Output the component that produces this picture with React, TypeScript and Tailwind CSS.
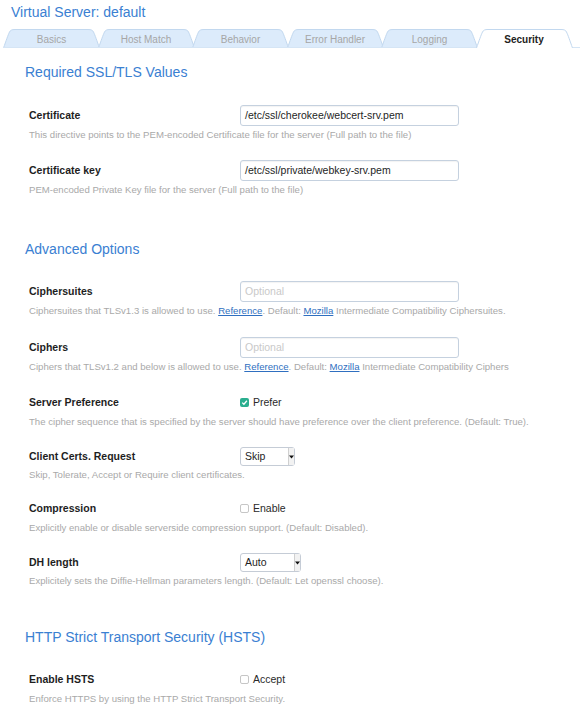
import React from "react";

const TABS = ["Basics", "Host Match", "Behavior", "Error Handler", "Logging", "Security"];

function Tab({ label, active, first }: { label: string; active: boolean; first: boolean }) {
  return (
    <div
      className={`relative w-[97px] h-[19px] flex items-center justify-center ${first ? "" : "-ml-[2.5px]"} ${active ? "z-10" : ""}`}
    >
      <svg className="absolute left-0 top-0" width="97" height="19" viewBox="0 0 97 19">
        <path
          d="M0.5 19 C3 12 5 6 6.5 3 C7.5 1 9 0.5 12 0.5 L85 0.5 C88 0.5 89.5 1 90.5 3 C92 6 94 12 96.5 19"
          fill={active ? "#ffffff" : "#dcebfb"}
          stroke="#c2d8ef"
          strokeWidth="1"
        />
        {!active && <line x1="0" y1="18.5" x2="97" y2="18.5" stroke="#d5e5f5" strokeWidth="1" />}
      </svg>
      <span
        className={`relative text-[10px] leading-[12px] mt-[2px] ${active ? "font-bold text-[#222]" : "text-[#a6a6a6]"}`}
      >
        {label}
      </span>
    </div>
  );
}

function Heading({ children, className = "" }: { children: React.ReactNode; className?: string }) {
  return <div className={`text-[14px] leading-[17px] text-[#3a80d2] ${className}`}>{children}</div>;
}

function Row({
  label,
  control,
  desc,
  h = 21,
  className = "",
}: {
  label: string;
  control: React.ReactNode;
  desc: React.ReactNode;
  h?: number;
  className?: string;
}) {
  return (
    <div className={`pl-[4px] ${className}`}>
      <div className={`flex items-center ${h === 21 ? "h-[21px]" : "h-[19px]"}`}>
        <div className="w-[211px] font-bold text-[10.5px] leading-[13px] text-[#1e1e1e]">{label}</div>
        {control}
      </div>
      <div className="mt-[3px] text-[9.6px] leading-[12px] text-[#a9a9a9] whitespace-nowrap">{desc}</div>
    </div>
  );
}

function TextInput({ value, placeholder }: { value?: string; placeholder?: string }) {
  return (
    <div className="w-[219px] h-[21px] border border-[#c5d1df] rounded-[3px] bg-white flex items-center px-[4px] shadow-[inset_0_1px_1px_rgba(0,0,0,0.05)]">
      {value ? (
        <span className="text-[10.5px] leading-[13px] text-[#1e1e1e]">{value}</span>
      ) : (
        <span className="text-[10.5px] leading-[13px] text-[#c9c9c9]">{placeholder}</span>
      )}
    </div>
  );
}

function Check({ checked, label }: { checked: boolean; label: string }) {
  return (
    <div className="flex items-center">
      {checked ? (
        <span className="w-[9px] h-[9px] rounded-[2px] bg-[#2bae8f] flex items-center justify-center">
          <svg width="7" height="7" viewBox="0 0 7 7">
            <path d="M1.2 3.6 L2.9 5.2 L5.9 1.8" fill="none" stroke="#fff" strokeWidth="1.3" />
          </svg>
        </span>
      ) : (
        <span className="w-[9px] h-[9px] rounded-[2px] border border-[#c6c6c6] bg-white" />
      )}
      <span className="ml-[4px] text-[10.5px] leading-[13px] text-[#2a2a2a]">{label}</span>
    </div>
  );
}

function Select({ value, w }: { value: string; w: "s" | "l" }) {
  return (
    <div
      className={`${w === "s" ? "w-[55px]" : "w-[61px]"} h-[19px] border border-[#c5ccd6] rounded-[3px] bg-white flex items-center justify-between pl-[4px]`}
    >
      <span className="text-[10.5px] leading-[13px] text-[#1e1e1e]">{value}</span>
      <span className="h-full w-[6px] flex items-center justify-center border-l border-[#d0d0d0] bg-[#f2f2f2]">
        <svg width="5" height="4" viewBox="0 0 5 4">
          <path d="M0 0.5 L5 0.5 L2.5 3.5 Z" fill="#111" />
        </svg>
      </span>
    </div>
  );
}

function Link({ children }: { children: React.ReactNode }) {
  return <span className="text-[#2f6fc0] underline">{children}</span>;
}

export default function App() {
  return (
    <div className="w-[580px] h-[714px] bg-white overflow-hidden font-['Liberation_Sans',Arial,sans-serif]">
      <div className="pl-[11px] pt-[4px] text-[14px] leading-[16px] text-[#3a80d2]">Virtual Server: default</div>
      <div className="mt-[9px] flex items-end pl-[3px] h-[19px]">
        {TABS.map((t, i) => (
          <Tab key={t} label={t} active={t === "Security"} first={i === 0} />
        ))}
        <div className="flex-1 h-[19px] border-b border-[#d5e5f5]" />
      </div>

      <div className="pl-[25px]">
        <Heading className="mt-[16px]">Required SSL/TLS Values</Heading>
        <Row
          className="mt-[24px]"
          label="Certificate"
          control={<TextInput value="/etc/ssl/cherokee/webcert-srv.pem" />}
          desc="This directive points to the PEM-encoded Certificate file for the server (Full path to the file)"
        />
        <Row
          className="mt-[19px]"
          label="Certificate key"
          control={<TextInput value="/etc/ssl/private/webkey-srv.pem" />}
          desc="PEM-encoded Private Key file for the server (Full path to the file)"
        />

        <Heading className="mt-[45px]">Advanced Options</Heading>
        <Row
          className="mt-[23px]"
          label="Ciphersuites"
          control={<TextInput placeholder="Optional" />}
          desc={
            <>
              Ciphersuites that TLSv1.3 is allowed to use. <Link>Reference</Link>. Default: <Link>Mozilla</Link>{" "}
              Intermediate Compatibility Ciphersuites.
            </>
          }
        />
        <Row
          className="mt-[20px]"
          label="Ciphers"
          control={<TextInput placeholder="Optional" />}
          desc={
            <>
              Ciphers that TLSv1.2 and below is allowed to use. <Link>Reference</Link>. Default: <Link>Mozilla</Link>{" "}
              Intermediate Compatibility Ciphers
            </>
          }
        />
        <Row
          className="mt-[19px]"
          label="Server Preference"
          control={<Check checked label="Prefer" />}
          desc="The cipher sequence that is specified by the server should have preference over the client preference. (Default: True)."
        />
        <Row
          className="mt-[19px]"
          h={19}
          label="Client Certs. Request"
          control={<Select value="Skip" w="s" />}
          desc="Skip, Tolerate, Accept or Require client certificates."
        />
        <Row
          className="mt-[17px]"
          label="Compression"
          control={<Check checked={false} label="Enable" />}
          desc="Explicitly enable or disable serverside compression support. (Default: Disabled)."
        />
        <Row
          className="mt-[19px]"
          h={19}
          label="DH length"
          control={<Select value="Auto" w="l" />}
          desc="Explicitely sets the Diffie-Hellman parameters length. (Default: Let openssl choose)."
        />

        <Heading className="mt-[42px]">HTTP Strict Transport Security (HSTS)</Heading>
        <Row
          className="mt-[23px]"
          label="Enable HSTS"
          control={<Check checked={false} label="Accept" />}
          desc="Enforce HTTPS by using the HTTP Strict Transport Security."
        />
      </div>
    </div>
  );
}
